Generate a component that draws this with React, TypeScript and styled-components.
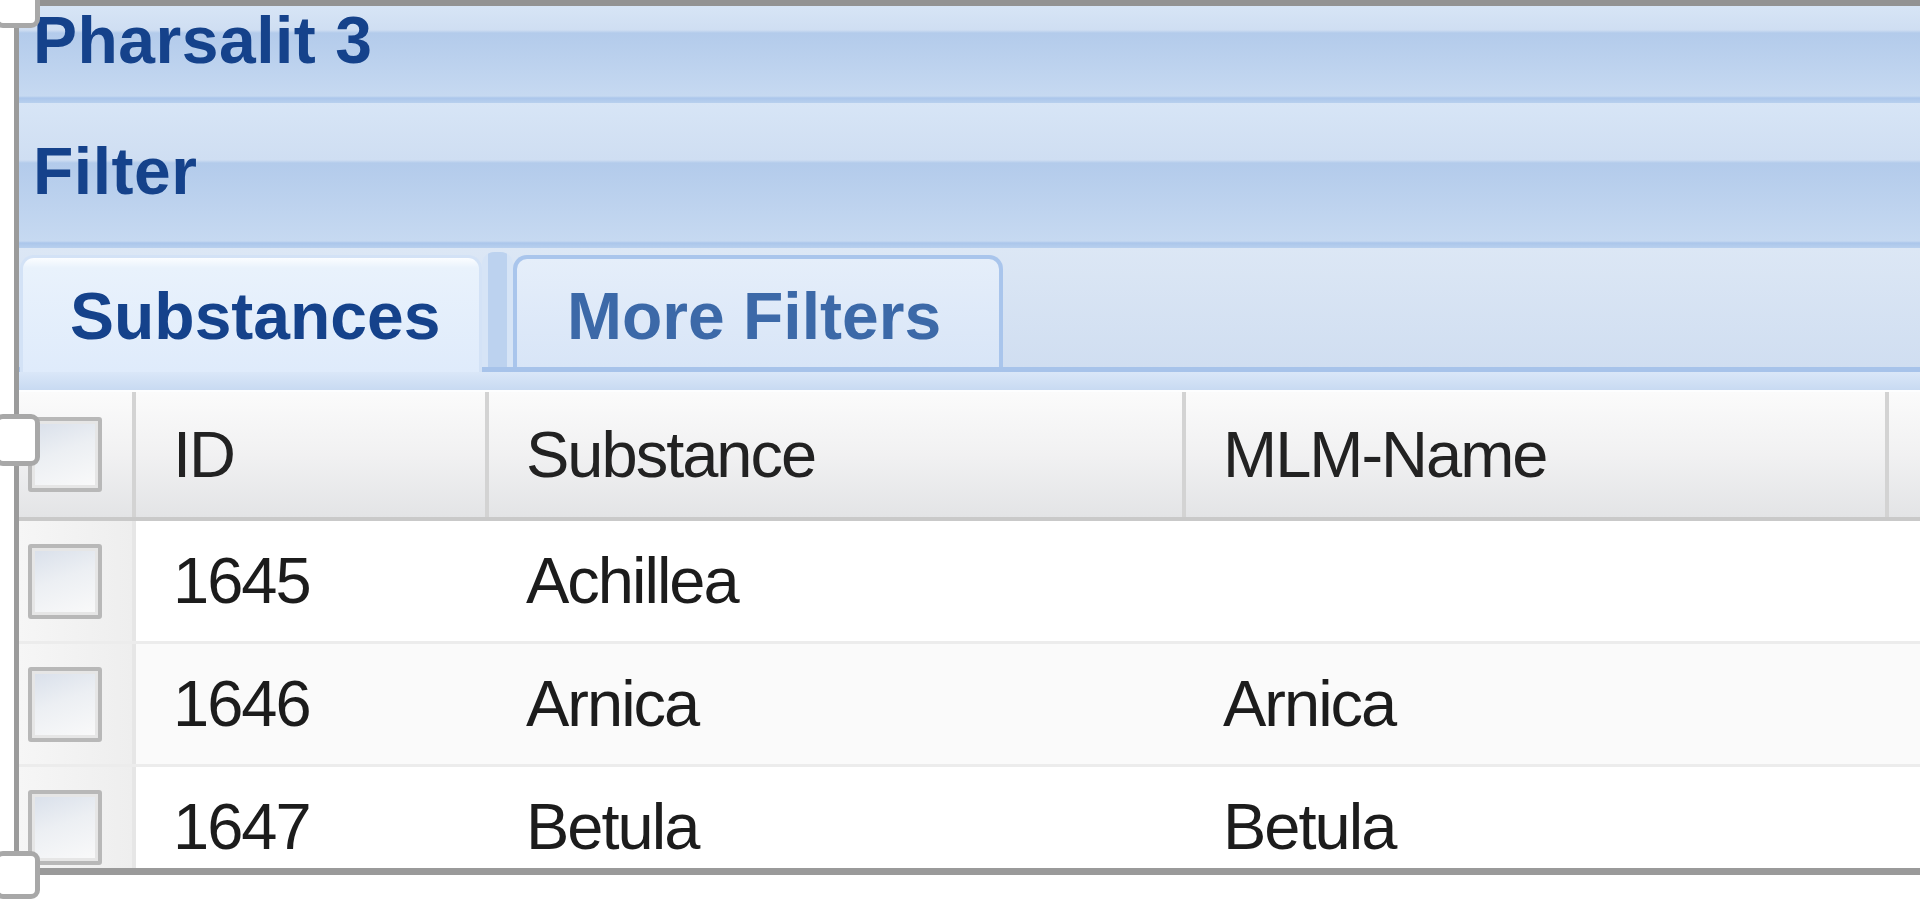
import React from 'react';
import styled, { createGlobalStyle } from 'styled-components';

const GlobalStyle = createGlobalStyle`
  html, body {
    margin: 0;
    padding: 0;
    background: #fff;
  }
  body {
    width: 1920px;
    height: 912px;
    overflow: hidden;
    font-family: "Liberation Sans", Arial, sans-serif;
  }
`;

const Page = styled.div`
  position: relative;
  width: 1920px;
  height: 912px;
  overflow: hidden;
`;

const Frame = styled.div`
  margin-left: 14px;
  width: 1906px;
  height: 862px;
  border-top: 6px solid #939393;
  border-left: 5px solid #9b9b9b;
  border-bottom: 7px solid #9a9a9a;
  display: flex;
  flex-direction: column;
  overflow: hidden;
`;

const PanelHeader = styled.div<{ $height: number; $pad: number; $split: number }>`
  flex: none;
  height: ${(p) => p.$height}px;
  box-sizing: border-box;
  padding: ${(p) => p.$pad}px 0 0 14px;
  background: linear-gradient(
    to bottom,
    #d7e5f6 0,
    #cfdef2 ${(p) => p.$split - 3}px,
    #b3cbeb ${(p) => p.$split}px,
    #c6d9f1 calc(100% - 7px),
    #abc6eb calc(100% - 5px),
    #b8d0ee 100%
  );
  font: bold 66px/66px "Liberation Sans", Arial, sans-serif;
  letter-spacing: 0.5px;
  color: #15428b;
  white-space: nowrap;
`;

const TabStrip = styled.div`
  flex: none;
  height: 142px;
  box-sizing: border-box;
  padding: 7px 0 0 1px;
  display: flex;
  align-items: flex-start;
  background: linear-gradient(
    to bottom,
    #dce7f5 0,
    #d0def1 119px,
    #a7c3ea 119px,
    #a7c3ea 124px,
    #dae7f8 124px,
    #c8daf2 142px
  );
`;

const Tab = styled.div<{ $active?: boolean }>`
  box-sizing: border-box;
  width: ${(p) => (p.$active ? 462 : 490)}px;
  height: ${(p) => (p.$active ? 117 : 112)}px;
  padding: ${(p) => (p.$active ? '25px 0 0 47px' : '24px 0 0 50px')};
  border: ${(p) => (p.$active ? '3px solid #d3e2f6' : '4px solid #a9c5ec')};
  border-bottom: none;
  border-radius: 14px 14px 0 0;
  background: ${(p) =>
    p.$active
      ? 'linear-gradient(to bottom, #fbfdff 0, #e9f2fc 10px, #dfebfb 100%)'
      : 'linear-gradient(to bottom, #e5eefa 0, #d8e5f7 100%)'};
  color: ${(p) => (p.$active ? '#15428b' : '#3c69a8')};
  font: bold 66px/66px "Liberation Sans", Arial, sans-serif;
  white-space: nowrap;
`;

const TabGap = styled.div`
  width: 31px;
  height: 115px;
  margin-top: -3px;
  border-radius: 12px 12px 0 0;
  background: linear-gradient(
    to right,
    #d6e4f6 0,
    #d6e4f6 6px,
    #bcd2ef 6px,
    #bcd2ef 25px,
    #d6e4f6 25px
  );
`;

const columns = '117px 353px 697px 703px 1fr';

const GridHead = styled.div`
  flex: none;
  height: 131px;
  box-sizing: border-box;
  display: grid;
  grid-template-columns: ${columns};
  background: linear-gradient(to bottom, #fbfbfb 0, #f1f1f2 50%, #e3e4e6 100%);
  border-top: 2px solid #fdfeff;
  border-bottom: 4px solid #c9c9c9;
`;

const HeadCell = styled.div<{ $check?: boolean }>`
  display: flex;
  align-items: center;
  box-sizing: border-box;
  padding-left: ${(p) => (p.$check ? 9 : 37)}px;
  border-right: 4px solid #d3d3d3;
  font: 65px/74px "Liberation Sans", Arial, sans-serif;
  letter-spacing: -2px;
  color: #222;
  white-space: nowrap;
`;

const GridBody = styled.div`
  flex: 1;
  overflow: hidden;
`;

const Row = styled.div<{ $alt?: boolean }>`
  height: 123px;
  box-sizing: border-box;
  display: grid;
  grid-template-columns: ${columns};
  background: ${(p) => (p.$alt ? '#fafafa' : '#fff')};
  border-bottom: 3px solid #ececec;
`;

const Cell = styled.div`
  display: flex;
  align-items: center;
  box-sizing: border-box;
  padding-left: 37px;
  font: 65px/74px "Liberation Sans", Arial, sans-serif;
  letter-spacing: -2px;
  color: #1c1c1c;
  white-space: nowrap;
`;

const CheckCell = styled.div`
  display: flex;
  align-items: center;
  box-sizing: border-box;
  padding-left: 9px;
  background: linear-gradient(to right, #f6f6f6, #eeeeee);
  border-right: 4px solid #e6e6e6;
`;

const CheckBox = styled.div`
  width: 74px;
  height: 75px;
  box-sizing: border-box;
  border: 4px solid #b8b8b8;
  border-radius: 3px;
  box-shadow: inset 0 0 0 3px #e6e6e6;
  background: linear-gradient(160deg, #d8dfea 0%, #eceff3 45%, #fafafa 100%);
`;

const Handle = styled.div<{ $top: number; $h: number }>`
  position: absolute;
  left: -6px;
  top: ${(p) => p.$top}px;
  width: 46px;
  height: ${(p) => p.$h}px;
  box-sizing: border-box;
  border: 5px solid #a8a8a8;
  border-radius: 9px;
  background: #fff;
`;

const rows = [
  { id: '1645', substance: 'Achillea', mlm: '' },
  { id: '1646', substance: 'Arnica', mlm: 'Arnica' },
  { id: '1647', substance: 'Betula', mlm: 'Betula' },
];

export default function App() {
  return (
    <Page>
      <GlobalStyle />
      <Frame>
        <PanelHeader $height={97} $pad={1} $split={27}>
          Pharsalit 3
        </PanelHeader>
        <PanelHeader $height={145} $pad={35} $split={60}>
          Filter
        </PanelHeader>
        <TabStrip>
          <Tab $active>Substances</Tab>
          <TabGap />
          <Tab>More Filters</Tab>
        </TabStrip>
        <GridHead>
          <HeadCell $check>
            <CheckBox />
          </HeadCell>
          <HeadCell>ID</HeadCell>
          <HeadCell>Substance</HeadCell>
          <HeadCell>MLM-Name</HeadCell>
          <HeadCell />
        </GridHead>
        <GridBody>
          {rows.map((r, i) => (
            <Row key={r.id} $alt={i % 2 === 1}>
              <CheckCell>
                <CheckBox />
              </CheckCell>
              <Cell>{r.id}</Cell>
              <Cell>{r.substance}</Cell>
              <Cell>{r.mlm}</Cell>
              <Cell />
            </Row>
          ))}
        </GridBody>
      </Frame>
      <Handle $top={-19} $h={47} />
      <Handle $top={414} $h={52} />
      <Handle $top={851} $h={48} />
    </Page>
  );
}
